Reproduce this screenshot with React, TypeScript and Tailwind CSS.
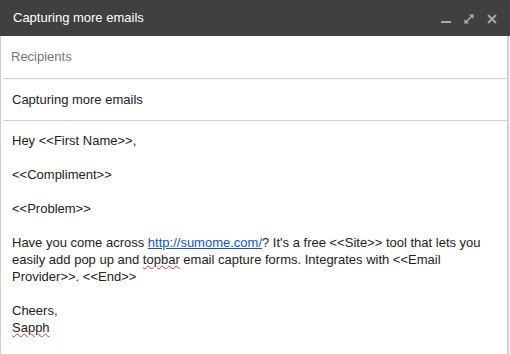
export default function App() {
  return (
    <div className="w-[510px] h-[354px] bg-white font-['Liberation_Sans',Arial,sans-serif] text-[13px] text-[#222] flex flex-col overflow-hidden">
      {/* Title bar */}
      <div className="h-[36px] bg-[#404040] flex items-center justify-between pl-[13px] pr-[12px] shrink-0">
        <span className="text-white text-[13px]">Capturing more emails</span>
        <div className="flex items-center gap-[11px] text-[#a8a8a8] pt-[1px]">
          <svg width="12" height="12" viewBox="0 0 12 12">
            <rect x="1" y="8" width="10" height="2" fill="currentColor" />
          </svg>
          <svg width="12" height="12" viewBox="0 0 12 12" fill="none">
            <path d="M2 10 L10 2" stroke="currentColor" strokeWidth="1.6" />
            <path d="M6 1.5 H10.5 V6 Z" fill="currentColor" />
            <path d="M1.5 6 V10.5 H6 Z" fill="currentColor" />
          </svg>
          <svg width="12" height="12" viewBox="0 0 12 12" fill="none">
            <path d="M2 2 L10 10 M10 2 L2 10" stroke="currentColor" strokeWidth="2" />
          </svg>
        </div>
      </div>

      <div className="flex-1 flex flex-col border-l border-r-2 border-r-[#cfcfcf] border-l-[#cfcfcf] mr-px">
        {/* Recipients */}
        <div className="h-[43px] ml-[2px] border-b border-[#cfcfcf] flex items-center pl-[8px] text-[#777] text-[13px]">
          Recipients
        </div>

        {/* Subject */}
        <div className="h-[42px] ml-[2px] border-b border-[#cfcfcf] flex items-center pl-[9px] text-[13px]">
          Capturing more emails
        </div>

        {/* Body */}
        <div className="pl-[11px] pr-[14px] pt-[11px] leading-[17px]">
          <div>Hey &lt;&lt;First Name&gt;&gt;,</div>
          <div>&nbsp;</div>
          <div>&lt;&lt;Compliment&gt;&gt;</div>
          <div>&nbsp;</div>
          <div>&lt;&lt;Problem&gt;&gt;</div>
          <div>&nbsp;</div>
          <div>
            Have you come across{' '}
            <a href="#" className="text-[#1155cc] underline">http://sumome.com/</a>? It's a free &lt;&lt;Site&gt;&gt; tool that lets you easily add pop up and{' '}
            <span className="underline decoration-wavy decoration-[#d33] decoration-1">topbar</span> email capture forms. Integrates with &lt;&lt;Email Provider&gt;&gt;. &lt;&lt;End&gt;&gt;
          </div>
          <div>&nbsp;</div>
          <div>Cheers,</div>
          <div>
            <span className="underline decoration-wavy decoration-[#d33] decoration-1">Sapph</span>
          </div>
        </div>
      </div>
    </div>
  );
}
